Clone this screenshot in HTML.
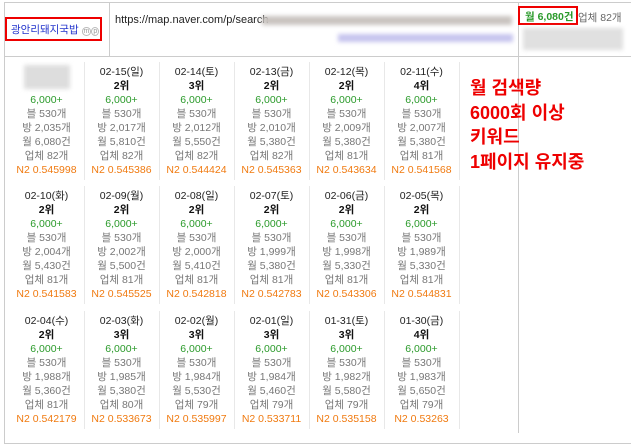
<!DOCTYPE html>
<html><head><meta charset="utf-8"><style>
body{margin:0;width:631px;height:433px;background:#fff;font-family:"Liberation Sans","Noto Sans CJK KR",sans-serif;position:relative;overflow:hidden}
.a{position:absolute}
.col{position:absolute;width:75px;text-align:center;font-size:10.5px;line-height:14px;color:#777}
.col div{height:14px}
.col .d{color:#222}.col .r{color:#111;font-weight:bold}.col .g{color:#2a9a2a}.col .n{color:#f07a10}
.sep{position:absolute;width:1px;background:#e8e8e8}
.blur{position:absolute;filter:blur(2px)}
</style></head><body>
<div class="a" style="left:4px;top:2px;width:640px;height:440px;border:1px solid #ccc"></div>
<div class="a" style="left:4px;top:56px;width:640px;height:1px;background:#ccc"></div>
<div class="a" style="left:109px;top:2px;width:1px;height:54px;background:#ccc"></div>
<div class="a" style="left:518px;top:2px;width:1px;height:431px;background:#ccc"></div>
<div class="a" style="left:5px;top:17px;width:97px;height:24px;border:2px solid #e00;box-sizing:border-box"></div>
<div class="a" style="left:11px;top:22px;font-size:10.5px;color:#2233cc">광안리돼지국밥 <span style="color:#999;font-size:7px;border:1px solid #bbb;border-radius:50%;padding:0 1px">m</span><span style="color:#999;font-size:7px;border:1px solid #bbb;border-radius:50%;padding:0 1px">p</span></div>
<div class="a" style="left:115px;top:14px;font-size:11px;color:#222">https://map.naver.com/p/search</div>
<div class="blur" style="left:262px;top:16px;width:250px;height:9px;background:#c9c4c0"></div>
<div class="blur" style="left:338px;top:34px;width:175px;height:8px;background:#c6c4ee"></div>
<div class="a" style="left:518px;top:6px;width:60px;height:19px;border:2px solid #e00;box-sizing:border-box"></div>
<div class="a" style="left:525px;top:9px;font-size:10.5px;color:#2a9a2a;font-weight:bold">월 6,080건</div>
<div class="a" style="left:578px;top:10px;font-size:10.5px;color:#666">업체 82개</div>
<div class="blur" style="left:523px;top:28px;width:100px;height:22px;background:#e0e0e0"></div>
<div class="blur" style="left:24px;top:65px;width:46px;height:24px;background:#ddd"></div>
<div class="a" style="left:470px;top:76px;font-size:18px;line-height:24.5px;font-weight:bold;color:#e00">월 검색량<br>6000회 이상<br>키워드<br>1페이지 유지중</div>
<div id="g"></div>
<script>
var rows=[[["",""],["02-15(일)","2위","530","2,017","5,810","82","0.545386"],["02-14(토)","3위","530","2,012","5,550","82","0.544424"],["02-13(금)","2위","530","2,010","5,380","82","0.545363"],["02-12(목)","2위","530","2,009","5,380","81","0.543634"],["02-11(수)","4위","530","2,007","5,380","81","0.541568"]],
[["02-10(화)","2위","530","2,004","5,430","81","0.541583"],["02-09(월)","2위","530","2,002","5,500","81","0.545525"],["02-08(일)","2위","530","2,000","5,410","81","0.542818"],["02-07(토)","2위","530","1,999","5,380","81","0.542783"],["02-06(금)","2위","530","1,998","5,330","81","0.543306"],["02-05(목)","2위","530","1,989","5,330","81","0.544831"]],
[["02-04(수)","2위","530","1,988","5,360","81","0.542179"],["02-03(화)","3위","530","1,985","5,380","80","0.533673"],["02-02(월)","3위","530","1,984","5,530","79","0.535997"],["02-01(일)","3위","530","1,984","5,460","79","0.533711"],["01-31(토)","3위","530","1,982","5,580","79","0.535158"],["01-30(금)","4위","530","1,983","5,650","79","0.53263"]]];
var h="",tops=[65,189,314];
rows[0][0]=["","","530","2,035","6,080","82","0.545998"];
for(var r=0;r<3;r++)for(var c=0;c<6;c++){var d=rows[r][c],x=9+c*75,t=tops[r];
h+='<div class="col" style="left:'+x+'px;top:'+t+'px"><div class="d">'+(d[0]||'&nbsp;')+'</div><div class="r">'+(d[1]||'&nbsp;')+'</div><div class="g">6,000+</div><div>블 '+d[2]+'개</div><div>방 '+d[3]+'개</div><div>월 '+d[4]+'건</div><div>업체 '+d[5]+'개</div><div class="n">N2 '+d[6]+'</div></div>';
h+='<div class="sep" style="left:'+(x+75)+'px;top:'+(t-3)+'px;height:118px"></div>';}
document.getElementById("g").innerHTML=h;
</script>
</body></html>
